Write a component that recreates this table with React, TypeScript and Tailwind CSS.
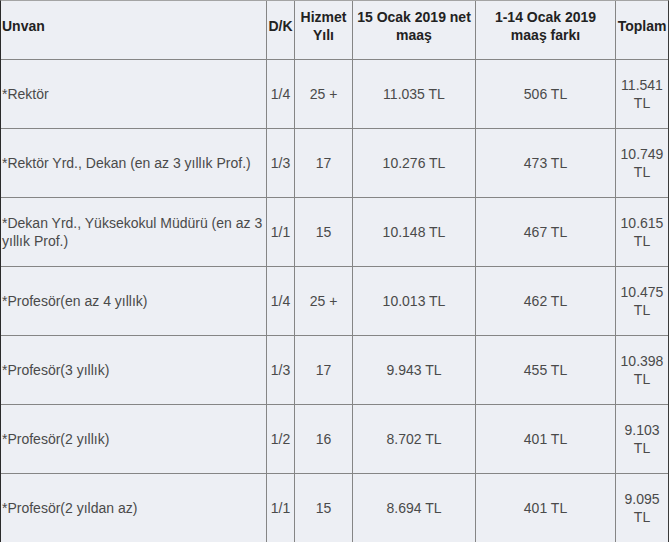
import React from 'react';

interface Row {
    unvan: string;
    dk: string;
    yil: string;
    maas: string;
    fark: string;
    toplam: string;
}

const ROWS: Row[] = [
    { unvan: '*Rektör', dk: '1/4', yil: '25 +', maas: '11.035 TL', fark: '506 TL', toplam: '11.541 TL' },
    { unvan: '*Rektör Yrd., Dekan (en az 3 yıllık Prof.)', dk: '1/3', yil: '17', maas: '10.276 TL', fark: '473 TL', toplam: '10.749 TL' },
    { unvan: '*Dekan Yrd., Yüksekokul Müdürü (en az 3 yıllık Prof.)', dk: '1/1', yil: '15', maas: '10.148 TL', fark: '467 TL', toplam: '10.615 TL' },
    { unvan: '*Profesör(en az 4 yıllık)', dk: '1/4', yil: '25 +', maas: '10.013 TL', fark: '462 TL', toplam: '10.475 TL' },
    { unvan: '*Profesör(3 yıllık)', dk: '1/3', yil: '17', maas: '9.943 TL', fark: '455 TL', toplam: '10.398 TL' },
    { unvan: '*Profesör(2 yıllık)', dk: '1/2', yil: '16', maas: '8.702 TL', fark: '401 TL', toplam: '9.103 TL' },
    { unvan: '*Profesör(2 yıldan az)', dk: '1/1', yil: '15', maas: '8.694 TL', fark: '401 TL', toplam: '9.095 TL' },
];

const cell = 'bg-[#edeff4] flex items-center justify-center text-center px-px';
const head = 'bg-[#edeff4] flex items-center justify-center text-center px-px pb-[9px] font-bold text-[#222]';

export default function App() {
    return (
        <div className="w-[670px] h-[542px] overflow-hidden bg-white font-['Liberation_Sans',Arial,sans-serif] text-[14px] leading-[18px]">
            <div className="w-[669px] border-l border-r border-t border-l-[#2a2a2a] border-r-[#3a3a3a] border-t-[#a4a4a4]">
                <div className="grid grid-cols-[265px_27px_57px_122px_139px_52px] grid-rows-[58px] auto-rows-[68px] gap-px bg-[#858585] text-[#4a4a4a]">
                    <div className={`${head} justify-start text-left`}>Unvan</div>
                    <div className={head}>D/K</div>
                    <div className={head}>Hizmet Yılı</div>
                    <div className={head}>15 Ocak 2019 net maaş</div>
                    <div className={head}>1-14 Ocak 2019 maaş farkı</div>
                    <div className={head}>Toplam</div>
                    {ROWS.map((r) => (
                        <React.Fragment key={r.unvan}>
                            <div className={`${cell} justify-start text-left`}>{r.unvan}</div>
                            <div className={cell}>{r.dk}</div>
                            <div className={cell}>{r.yil}</div>
                            <div className={cell}>{r.maas}</div>
                            <div className={cell}>{r.fark}</div>
                            <div className={cell}>{r.toplam}</div>
                        </React.Fragment>
                    ))}
                </div>
            </div>
        </div>
    );
}
